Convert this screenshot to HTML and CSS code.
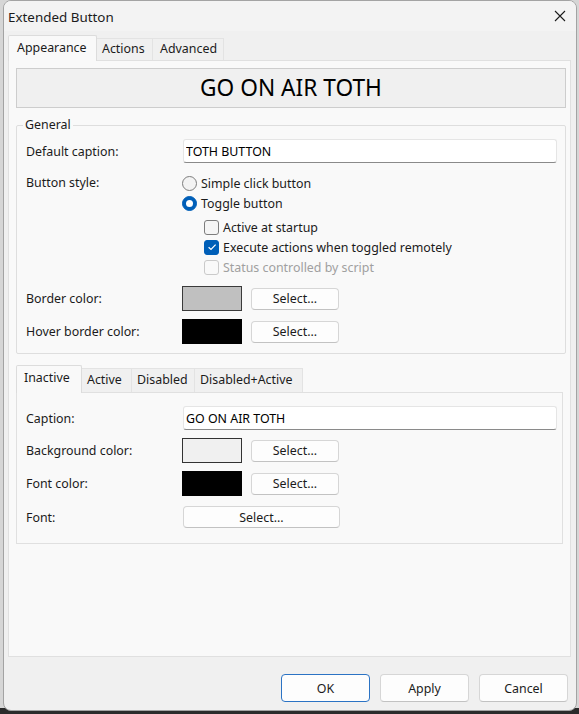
FILE: index.html
```html
<!DOCTYPE html>
<html>
<head>
<meta charset="utf-8">
<link rel="stylesheet" href="styles.css">
</head>
<body>
<div class="window">
  <div class="titlebar">
    <span class="title">Extended Button</span>
    <svg class="close" width="12" height="12" viewBox="0 0 12 12"><path d="M1 1 L11 11 M11 1 L1 11" stroke="#1c1c1c" stroke-width="1.1" fill="none"/></svg>
  </div>
  <div class="content">
    <div class="tabstrip">
      <div class="tab active t-appearance">Appearance</div>
      <div class="tab t-actions">Actions</div>
      <div class="tab t-advanced">Advanced</div>
    </div>
    <div class="pane main-pane">
      <div class="preview">GO ON AIR TOTH</div>
      <fieldset class="group">
        <legend>General</legend>
        <div class="group-body">
          <div class="row row-input">
            <span class="label">Default caption:</span>
            <input class="text" type="text" value="TOTH BUTTON">
          </div>
          <div class="row row-style">
            <span class="label">Button style:</span>
            <div class="options">
              <div class="opt"><span class="radio"></span><span>Simple click button</span></div>
              <div class="opt"><span class="radio on"></span><span>Toggle button</span></div>
              <div class="subopts">
                <div class="opt"><span class="check"></span><span>Active at startup</span></div>
                <div class="opt"><span class="check on"><svg width="10" height="10" viewBox="0 0 10 10"><path d="M1.6 5.2 L4 7.5 L8.6 2.6" stroke="#fff" stroke-width="1.2" fill="none"/></svg></span><span>Execute actions when toggled remotely</span></div>
                <div class="opt disabled"><span class="check off"></span><span>Status controlled by script</span></div>
              </div>
            </div>
          </div>
          <div class="row row-color first-color">
            <span class="label">Border color:</span>
            <span class="swatch gray"></span>
            <button class="btn select">Select...</button>
          </div>
          <div class="row row-color">
            <span class="label">Hover border color:</span>
            <span class="swatch black"></span>
            <button class="btn select">Select...</button>
          </div>
        </div>
      </fieldset>

      <div class="tabstrip sub">
        <div class="tab active s-inactive">Inactive</div>
        <div class="tab s-active">Active</div>
        <div class="tab s-disabled">Disabled</div>
        <div class="tab s-disact">Disabled+Active</div>
      </div>
      <div class="pane sub-pane">
        <div class="row row-input">
          <span class="label">Caption:</span>
          <input class="text" type="text" value="GO ON AIR TOTH">
        </div>
        <div class="row row-color">
          <span class="label">Background color:</span>
          <span class="swatch light"></span>
          <button class="btn select">Select...</button>
        </div>
        <div class="row row-color">
          <span class="label">Font color:</span>
          <span class="swatch black"></span>
          <button class="btn select">Select...</button>
        </div>
        <div class="row row-font">
          <span class="label">Font:</span>
          <button class="btn wide">Select...</button>
        </div>
      </div>
    </div>
    <div class="footer">
      <button class="btn dlg default">OK</button>
      <button class="btn dlg">Apply</button>
      <button class="btn dlg">Cancel</button>
    </div>
  </div>
</div>
</body>
</html>
```
FILE: styles.css
```css
* { box-sizing: border-box; }
html, body { margin: 0; padding: 0; }
body {
  width: 579px;
  height: 714px;
  overflow: hidden;
  background: linear-gradient(to bottom, #d6d6d6 0, #d6d6d6 708px, #2b2b2b 708px);
  font-family: "Noto Sans", "Open Sans", sans-serif;
  font-size: 12.4px;
  color: #1b1b1b;
}
.window {
  margin-left: 3px;
  width: 574px;
  height: 711px;
  background: #f0f0f0;
  border: 1px solid #a3a3a3;
  border-radius: 8px;
  display: flex;
  flex-direction: column;
  overflow: hidden;
}
.titlebar {
  height: 30px;
  flex: none;
  background: #f3f3f3;
  display: flex;
  align-items: center;
  padding-left: 4px;
  padding-right: 10px;
}
.title { flex: 1; font-size: 13.4px; line-height: 16px; padding-top: 1px; }
.close { flex: none; }

.content {
  flex: 1;
  padding: 4px 4px 0 4px;
  display: flex;
  flex-direction: column;
}
.tabstrip {
  display: flex;
  align-items: flex-end;
  height: 25px;
  flex: none;
  position: relative;
  z-index: 1;
}
.tab {
  height: 22px;
  line-height: 20px;
  padding: 0 6px;
  background: #f0f0f0;
  border: 1px solid #e3e3e3;
  border-bottom: none;
  margin-left: -1px;
  white-space: nowrap;
  color: #1b1b1b;
}
.tab:first-child { margin-left: 0; }
.tab.active {
  height: 26px;
  line-height: 23px;
  margin-bottom: -1px;
  background: #f9f9f9;
  border-color: #dcdcdc;
  border-radius: 2px 2px 0 0;
  z-index: 2;
}
.t-appearance { width: 89px; padding-left: 8px; }
.t-actions { width: 57px; padding-left: 5px; }
.t-advanced { width: 72px; padding-left: 7px; }
.s-inactive { width: 66px; padding-left: 7px; }
.s-active { width: 51px; padding-left: 5px; }
.s-disabled { width: 64px; padding-left: 5px; }
.s-disact { width: 109px; padding-left: 5px; }

.pane {
  background: #f9f9f9;
  border: 1px solid #e0e0e0;
}
.main-pane {
  width: 563px;
  height: 597px;
  flex: none;
  padding: 7px 4px 0 7px;
  display: flex;
  flex-direction: column;
}
.preview {
  height: 40px;
  flex: none;
  background: #f0f0f0;
  border: 1px solid #cdcdcd;
  text-align: center;
  font-size: 22.7px;
  line-height: 38px;
  color: #000;
}
.group {
  margin: 9px 0 0 0;
  padding: 0;
  border: 1px solid #dedede;
  border-radius: 2px;
  min-width: 0;
}
.group legend {
  margin-left: 6px;
  padding: 0 2px;
  line-height: 16px;
  height: 16px;
}
.group-body {
  padding: 6px 8px 9px 9px;
}
.row { display: flex; align-items: center; }
.label { width: 156px; flex: none; white-space: nowrap; }
.row-input { height: 24px; }
.text {
  margin-left: 1px;
  width: 374px;
  height: 24px;
  border: 1px solid #e5e5e5;
  border-bottom-color: #8a8a8a;
  border-radius: 3px;
  background: #fff;
  font: inherit;
  color: #000;
  padding: 0 0 0 2px;
  outline: none;
}
.row-style { align-items: flex-start; margin-top: 10px; }
.row-style .label { line-height: 20px; }
.options { display: flex; flex-direction: column; }
.opt { display: flex; align-items: center; height: 20px; white-space: nowrap; }
.subopts { margin-top: 4px; padding-left: 22px; }
.radio {
  width: 15px; height: 15px;
  border-radius: 50%;
  border: 1px solid #7d7d7d;
  background: #f3f3f3;
  margin-right: 4px;
  flex: none;
  display: flex; align-items: center; justify-content: center;
}
.radio.on { background: #005fb8; border-color: #005fb8; }
.radio.on::after {
  content: "";
  width: 7px; height: 7px;
  border-radius: 50%;
  background: #fff;
}
.check {
  width: 15px; height: 15px;
  border: 1px solid #7d7d7d;
  border-radius: 3px;
  background: #f5f5f5;
  margin-right: 4px;
  flex: none;
  display: flex; align-items: center; justify-content: center;
}
.check.on { background: #005fb8; border-color: #005fb8; }
.check.off { border-color: #cacaca; background: #f9f9f9; }
.disabled { color: #a0a0a0; }

.row-color { height: 25px; margin-top: 8px; }
.first-color { margin-top: 9px; }
.swatch {
  width: 60px; height: 25px;
  border: 1px solid #3a3a3a;
  flex: none;
}
.swatch.gray { background: #c0c0c0; }
.swatch.black { background: #000; border-color: #000; }
.swatch.light { background: #f0f0f0; border-color: #333; }

.btn {
  font: inherit;
  color: #1b1b1b;
  background: #fdfdfd;
  border: 1px solid #d6d6d6;
  border-bottom-color: #c2c2c2;
  border-radius: 4px;
  padding: 0;
  text-align: center;
}
.select { width: 88px; height: 22px; margin-left: 9px; }
.wide { width: 157px; height: 22px; margin-left: 1px; }

.tabstrip.sub { margin-top: 11px; height: 27px; }
.tabstrip.sub .tab { height: 24px; line-height: 22px; }
.tabstrip.sub .tab.active { height: 28px; line-height: 24px; }
.sub-pane {
  width: 547px;
  flex: none;
  padding: 13px 4px 15px 9px;
}
.sub-pane .label { width: 157px; }
.sub-pane .text { margin-left: 0; }
.sub-pane .swatch { margin-left: -1px; }
.sub-pane .row-color { margin-top: 8px; }
.row-font { height: 22px; margin-top: 10px; }
.row-font .wide { margin-left: 0; }

.footer {
  display: flex;
  justify-content: flex-end;
  gap: 10px;
  padding: 17px 4px 0 0;
}
.dlg { width: 89px; height: 28px; }
.dlg.default { border: 1px solid #2b73c4; }
```
